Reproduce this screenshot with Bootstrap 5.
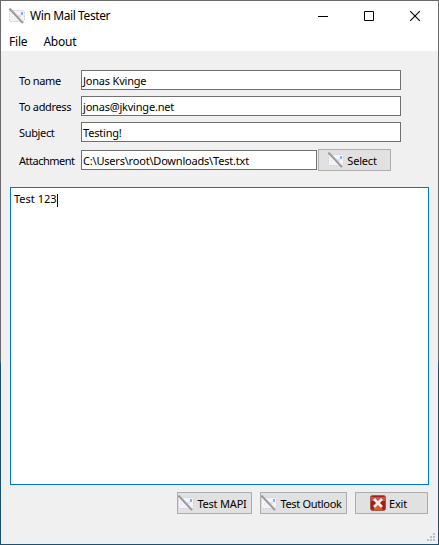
<!DOCTYPE html>
<html lang="en">
<head>
<meta charset="utf-8">
<title>Win Mail Tester</title>
<link href="https://cdn.jsdelivr.net/npm/bootstrap@5.3.0/dist/css/bootstrap.min.css" rel="stylesheet">
<style>
body{font-family:"Noto Sans",sans-serif;font-size:11px;line-height:18px;color:#000;overflow:hidden}
.win{width:439px;height:545px;background:#f0f0f0;border:1px solid #6b6b6b;border-image:linear-gradient(#6b6b6b 0 66%,#1b5070 67%) 1}
.titlebar{height:30px;padding-left:8px;font-size:12px}
.titlebar .cap{width:46px;display:flex;justify-content:center}
.titlebar .name{margin-left:5px;letter-spacing:-.4px}
.menu{height:20px;padding:1px 8px 0;font-size:12px;line-height:20px;letter-spacing:-.2px}
.fields{padding:19px 0 0 18px}
.fields label{width:62px;flex:none;letter-spacing:-.35px;padding-top:2px}
.fields label.tight{letter-spacing:-.5px}
.form-control.tb{height:20px;width:320px;flex:none;border:1px solid #707070;border-radius:0;padding:1px 1px 0 1px;font-size:11px;line-height:17px;min-height:0;color:#000;background:#fff;letter-spacing:-.2px}
.form-control.tb.file{width:236px}
.btn.wb{height:22px;width:73px;border:1px solid #adadad;border-radius:0;background:#e1e1e1;color:#000;font-size:11px;line-height:20px;padding:0 4px 0 0;display:flex;align-items:center;justify-content:center;gap:3px;white-space:nowrap;letter-spacing:-.2px}
.btn.wb span{padding-top:1px}
.btn.wb.outlook{width:87px;letter-spacing:-.33px}
.btn.wb.exit{padding-right:6px}
.memo{margin:16px 9px 0;height:298px;border:1px solid #0078d7;background:#fff;padding:2px 3px}
.caret{width:1px;height:13px;background:#000}
.grip{position:absolute;right:3px;bottom:3px}
svg{flex:none;display:block}
</style>
</head>
<body>
<svg width="0" height="0" class="position-absolute">
<symbol id="mail" viewBox="0 0 16 16">
<rect x=".5" y="2.5" width="15" height="11" rx="1" fill="#f2f4f9" stroke="#d8cfd6" stroke-dasharray="2 1"/>
<path d="M12 4h2v3h-2z" fill="#7fb0f0"/><path d="M3 9h1M9 8h3" stroke="#e8c4c9"/>
<path d="M.5 .5 14 15" stroke="#949494" stroke-width="2"/><path d="M1.5 .5 14.5 14.5" stroke="#c4c4c4" stroke-width=".7"/>
</symbol>
</svg>
<div class="win d-flex flex-column position-relative">
<div class="titlebar bg-white d-flex align-items-center">
<svg width="16" height="16"><use href="#mail"/></svg><span class="name">Win Mail Tester</span>
<div class="d-flex ms-auto">
<span class="cap"><svg width="10" height="10"><path d="M0 5.5h10" stroke="#000"/></svg></span>
<span class="cap"><svg width="10" height="10"><path d="M.5.5h9v9h-9z" fill="none" stroke="#000"/></svg></span>
<span class="cap"><svg width="10" height="10"><path d="m0 0 10 10M10 0 0 10" stroke="#000" stroke-width="1.1"/></svg></span>
</div>
</div>
<nav class="menu bg-white d-flex"><span>File</span><span class="ms-3">About</span></nav>
<form class="fields">
<div class="d-flex align-items-center"><label>To name</label><div class="form-control tb">Jonas Kvinge</div></div>
<div class="d-flex align-items-center" style="margin-top:6px"><label>To address</label><div class="form-control tb">jonas@jkvinge.net</div></div>
<div class="d-flex align-items-center" style="margin-top:6px"><label>Subject</label><div class="form-control tb">Testing!</div></div>
<div class="d-flex align-items-center" style="margin-top:7px"><label class="tight">Attachment</label><div class="form-control tb file">C:\Users\root\Downloads\Test.txt</div>
<button type="button" class="btn wb" style="margin-left:1px"><svg width="16" height="16"><use href="#mail"/></svg><span>Select</span></button></div>
</form>
<div class="memo d-flex"><span>Test 123</span><span class="caret mt-1"></span></div>
<div class="d-flex justify-content-end gap-2" style="padding:7px 10px 0 0">
<button type="button" class="btn wb" style="width:75px"><svg width="16" height="16"><use href="#mail"/></svg><span>Test MAPI</span></button>
<button type="button" class="btn wb outlook"><svg width="16" height="16"><use href="#mail"/></svg><span>Test Outlook</span></button>
<button type="button" class="btn wb exit"><svg width="16" height="16" viewBox="0 0 16 16"><rect x=".5" y=".5" width="15" height="15" rx="2" fill="#a81c18" stroke="#a05a55"/><path d="M1 2h14v4H1z" fill="#c0584f"/><path d="m8 8 5 7H3z" fill="#e8571a"/><path d="m4 4 8 8M12 4l-8 8" stroke="#f4f0f0" stroke-width="2.6"/></svg><span>Exit</span></button>
</div>
<svg class="grip" width="8" height="8"><path d="M6 0h2v2H6zM3 3h2v2H3zM6 3h2v2H6zM0 6h2v2H0zM3 6h2v2H3zM6 6h2v2H6z" fill="#bfbfbf"/></svg>
</div>
<script src="https://cdn.jsdelivr.net/npm/bootstrap@5.3.0/dist/js/bootstrap.bundle.min.js"></script>
</body>
</html>
